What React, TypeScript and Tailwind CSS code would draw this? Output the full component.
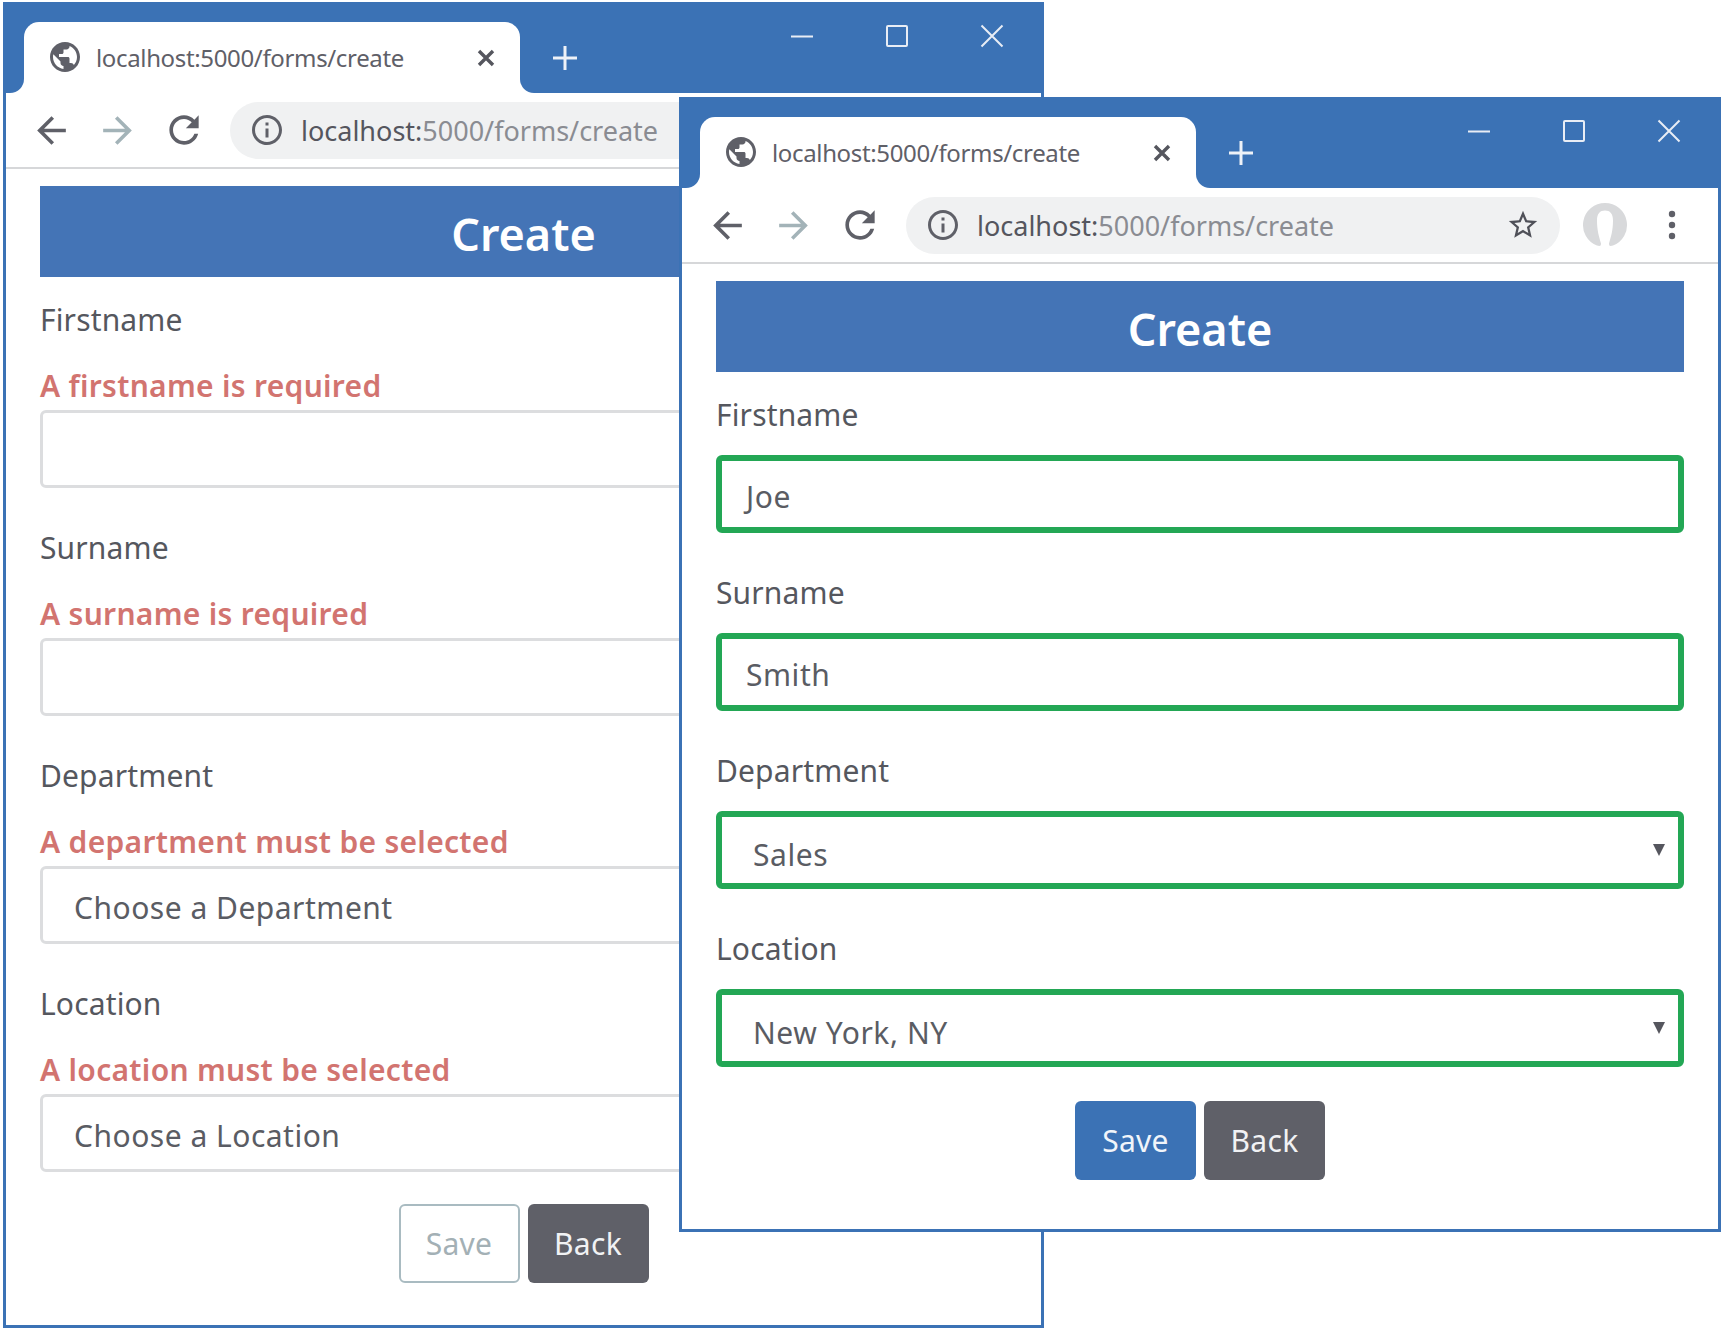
import React from "react";

const GREY = "#5f6068";

function Icon({ d, size, color = GREY, className = "" }: { d: string; size: number; color?: string; className?: string }) {
  return (
    <svg width={size} height={size} viewBox="0 0 24 24" className={`shrink-0 ${className}`}>
      <path d={d} fill={color} />
    </svg>
  );
}

const GLOBE =
  "M12 2C6.48 2 2 6.48 2 12s4.48 10 10 10 10-4.48 10-10S17.52 2 12 2zm-1 17.93c-3.95-.49-7-3.85-7-7.93 0-.62.08-1.21.21-1.79L9 15v1c0 1.1.9 2 2 2v1.93zm6.9-2.54c-.26-.81-1-1.39-1.9-1.39h-1v-3c0-.55-.45-1-1-1H8v-2h2c.55 0 1-.45 1-1V7h2c1.1 0 2-.9 2-2v-.41c2.93 1.19 5 4.06 5 7.41 0 2.08-.8 3.97-2.1 5.39z";
const BACK = "M20 11H7.83l5.59-5.59L12 4l-8 8 8 8 1.41-1.41L7.83 13H20v-2z";
const FORWARD = "M4 11h12.17l-5.59-5.59L12 4l8 8-8 8-1.41-1.41L16.17 13H4v-2z";
const RELOAD =
  "M17.65 6.35C16.2 4.9 14.21 4 12 4c-4.42 0-7.99 3.58-7.99 8s3.57 8 7.99 8c3.73 0 6.84-2.55 7.73-6h-2.08c-.82 2.33-3.04 4-5.65 4-3.31 0-6-2.69-6-6s2.69-6 6-6c1.66 0 3.14.69 4.22 1.78L13 11h7V4l-2.35 2.35z";
const INFO =
  "M11 7h2v2h-2zm0 4h2v6h-2zm1-9C6.48 2 2 6.48 2 12s4.48 10 10 10 10-4.48 10-10S17.52 2 12 2zm0 18c-4.41 0-8-3.59-8-8s3.59-8 8-8 8 3.59 8 8-3.59 8-8 8z";
const STAR =
  "M22 9.24l-7.19-.62L12 2 9.19 8.63 2 9.24l5.46 4.73L5.82 21 12 17.27 18.18 21l-1.63-7.03L22 9.24zM12 15.4l-3.76 2.27 1-4.28-3.32-2.88 4.38-.38L12 6.1l1.71 4.04 4.38.38-3.32 2.88 1 4.28L12 15.4z";

function WindowControls() {
  return (
    <div className="ml-auto mt-[22px] flex items-start self-start pr-[37px]">
      <svg width="24" height="24" viewBox="0 0 24 24" className="mr-[71px]">
        <path d="M1 12.500h22" stroke="#e8edf5" strokeWidth="2" />
      </svg>
      <svg width="24" height="24" viewBox="0 0 24 24" className="mr-[71px]">
        <rect x="2" y="2" width="20" height="20" rx="1" fill="none" stroke="#e8edf5" strokeWidth="2" />
      </svg>
      <svg width="24" height="24" viewBox="0 0 24 24">
        <path d="M1.500 1.500 22.500 22.500M22.500 1.500 1.500 22.500" stroke="#e8edf5" strokeWidth="2" />
      </svg>
    </div>
  );
}

function TitleBar() {
  return (
    <div className="flex h-[91px] items-end bg-[#3b72b5] pl-[18px]">
      <div className="relative flex h-[71px] w-[496px] shrink-0 items-center rounded-t-[15px] bg-white pl-[24px]">
        <div className="absolute bottom-0 left-[-14px] h-[14px] w-[14px] bg-white">
          <div className="h-full w-full rounded-br-[14px] bg-[#3b72b5]" />
        </div>
        <div className="absolute bottom-0 right-[-14px] h-[14px] w-[14px] bg-white">
          <div className="h-full w-full rounded-bl-[14px] bg-[#3b72b5]" />
        </div>
        <Icon d={GLOBE} size={36} className="ml-[-1px] mt-[-1px]" />
        <span className="ml-[13px] text-[24px] leading-none tracking-[-0.35px] text-[#5f6068]">localhost:5000/forms/create</span>
        <svg width="18" height="18" viewBox="0 0 18 18" className="ml-auto mr-[25px]">
          <path d="M2 2 16 16M16 2 2 16" stroke="#55565e" strokeWidth="3.4" />
        </svg>
      </div>
      <svg width="26" height="26" viewBox="0 0 26 26" className="mb-[22px] ml-[32px] shrink-0">
        <path d="M13 1v24M1 13h24" stroke="#eef2f8" strokeWidth="3" />
      </svg>
      <WindowControls />
    </div>
  );
}

function Toolbar() {
  return (
    <div className="flex h-[76px] items-center border-b-2 border-[#d6d7d9] pl-[24px]">
      <Icon d={BACK} size={43} />
      <Icon d={FORWARD} size={43} color="#a3b3b8" className="ml-[23px]" />
      <Icon d={RELOAD} size={44} className="ml-[23px]" />
      <div className="ml-[24px] flex h-[57px] w-[654px] shrink-0 items-center rounded-full bg-[#f0f1f2] pl-[19px]">
        <Icon d={INFO} size={36} />
        <span className="ml-[16px] text-[27px] leading-none text-[#8a8c92]">
          <span className="text-[#55565e]">localhost:</span>5000/forms/create
        </span>
        <Icon d={STAR} size={34} className="ml-auto mr-[20px]" color="#4f5058" />
      </div>
      <svg width="46" height="46" viewBox="0 0 46 46" className="ml-[22px] shrink-0">
        <path
          d="M23 1a22 22 0 0 1 8 42.500c-3 1-4 .5-4-2 2-7 4-13 4-23 0-7-3-10-8-10s-8 3-8 10c0 10 2 16 4 23 0 2.500-1 3-4 2A22 22 0 0 1 23 1z"
          fill="#d8d9db"
        />
      </svg>
      <svg width="8" height="32" viewBox="0 0 8 32" className="ml-[40px] shrink-0">
        <circle cx="4" cy="5" r="3.200" fill={GREY} />
        <circle cx="4" cy="16" r="3.200" fill={GREY} />
        <circle cx="4" cy="27" r="3.200" fill={GREY} />
      </svg>
    </div>
  );
}

function Field({
  label,
  error,
  value,
  select,
  valid,
}: {
  label: string;
  error?: string;
  value?: string;
  select?: boolean;
  valid?: boolean;
}) {
  return (
    <div className="mb-[37px]">
      <div className="h-[44px] text-[30px] leading-[46px] tracking-[0.15px] text-[#55575e]">{label}</div>
      {error ? (
        <div className="mb-[3px] mt-[22px] h-[44px] text-[30px] font-semibold leading-[46px] tracking-[0.3px] text-[#d27470]">
          {error}
        </div>
      ) : (
        <div className="h-[19px]" />
      )}
      <div
        className={`flex h-[78px] items-center justify-between rounded-[6px] text-[30px] text-[#5a5c63] ${
          valid ? "border-[6px] border-[#23a755] tracking-[0.55px]" : "border-[3px] border-[#dcdddf] tracking-[0.5px]"
        } ${select ? "pl-[31px]" : "pl-[24px]"} ${select && valid ? "pt-[8px]" : "pt-[5px]"}`}
      >
        <span>{value}</span>
        {select && valid && (
          <svg width="14" height="14" viewBox="0 0 14 14" className="mb-[8px] mr-[12px]">
            <path d="M1 1h12L7 13z" fill="#55565e" />
          </svg>
        )}
      </div>
    </div>
  );
}

function Buttons({ saveEnabled }: { saveEnabled: boolean }) {
  return (
    <div
      className={`flex justify-center gap-[8px] text-[30px] tracking-[0.3px] ${saveEnabled ? "mt-[-3px]" : "mt-[-5px]"}`}
    >
      <div
        className={`flex h-[79px] w-[121px] items-center justify-center rounded-[6px] ${
          saveEnabled ? "bg-[#3b72b5] text-[#f1f5fa]" : "border-[2px] border-[#a9bbc1] bg-white text-[#a3b0b5]"
        }`}
      >
        Save
      </div>
      <div className="flex h-[79px] w-[121px] items-center justify-center rounded-[6px] bg-[#5f6068] text-[#f1f2f4]">Back</div>
    </div>
  );
}

function Win({ className, children }: { className: string; children: React.ReactNode }) {
  return (
    <div className={`absolute flex flex-col border-[3px] border-t-0 border-[#3b72b5] bg-white ${className}`}>
      <TitleBar />
      <Toolbar />
      <div className="px-[34px] pt-[17px]">
        <div className="mb-[20px] flex h-[91px] items-center justify-center bg-[#4474b6] pt-[5px] text-[45px] font-semibold text-white">
          Create
        </div>
        {children}
      </div>
    </div>
  );
}

export default function App() {
  return (
    <div className="relative h-[1332px] w-[1725px] overflow-hidden bg-white font-['Noto_Sans',sans-serif]">
      <Win className="left-[3px] top-[2px] h-[1326px] w-[1041px]">
        <Field label="Firstname" error="A firstname is required" />
        <Field label="Surname" error="A surname is required" />
        <Field label="Department" error="A department must be selected" value="Choose a Department" select />
        <Field label="Location" error="A location must be selected" value="Choose a Location" select />
        <Buttons saveEnabled={false} />
      </Win>
      <Win className="left-[679px] top-[97px] h-[1135px] w-[1042px]">
        <Field label="Firstname" value="Joe" valid />
        <Field label="Surname" value="Smith" valid />
        <Field label="Department" value="Sales" select valid />
        <Field label="Location" value="New York, NY" select valid />
        <Buttons saveEnabled />
      </Win>
    </div>
  );
}
